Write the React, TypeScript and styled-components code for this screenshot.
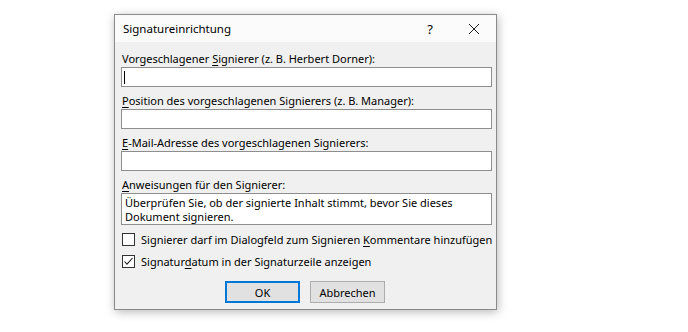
import React from 'react'
import styled, { createGlobalStyle } from 'styled-components'

const GlobalStyle = createGlobalStyle`
  body {
    margin: 0;
    background: #ffffff;
    font-family: 'Noto Sans', 'Open Sans', sans-serif;
    font-size: 11px;
    color: #000;
  }
`

const Page = styled.div`
  padding: 14px 0 0 114px;
  height: 332px;
  box-sizing: border-box;
`

const Dialog = styled.div`
  width: 383px;
  height: 296px;
  box-sizing: border-box;
  border: 1px solid #8a8a8a;
  background: #f0f0f0;
  box-shadow: 1px 2px 9px rgba(0, 0, 0, 0.28);
  display: flex;
  flex-direction: column;
`

const TitleBar = styled.div`
  height: 27px;
  background: #fbfbfb;
  display: flex;
  align-items: center;
  padding-left: 8px;
`

const Title = styled.div`
  flex: 1;
  font-size: 11.5px;
`

const TitleButton = styled.div`
  width: 44px;
  height: 27px;
  display: flex;
  align-items: center;
  justify-content: center;
  font-size: 13px;
`

const Body = styled.div`
  flex: 1;
  padding: 9px 5px 0 6px;
  display: flex;
  flex-direction: column;
`

const Field = styled.div<{ $first?: boolean }>`
  margin-top: ${({ $first }) => ($first ? 0 : 6)}px;
  display: flex;
  flex-direction: column;
`

const Label = styled.div`
  height: 16px;
  line-height: 16px;
  padding-left: 1px;
  white-space: nowrap;
`

const Key = styled.span`
  text-decoration: underline;
  text-underline-offset: 2px;
`

const Input = styled.div<{ $tall?: boolean }>`
  position: relative;
  height: ${({ $tall }) => ($tall ? 32 : 20)}px;
  box-sizing: border-box;
  width: 371px;
  border: 1px solid #8e8e8e;
  background: #fff;
  padding: 2px 3px;
  line-height: 14px;
  white-space: pre-line;
`

const Caret = styled.span`
  position: absolute;
  left: 2px;
  top: 3px;
  width: 1px;
  height: 13px;
  background: #000;
`

const Checks = styled.div`
  margin-top: 6px;
  display: flex;
  flex-direction: column;
  gap: 5px;
`

const CheckRow = styled.div`
  height: 17px;
  display: flex;
  align-items: center;
  gap: 6px;
  padding-left: 1px;
  white-space: nowrap;
`

const Box = styled.span`
  flex-shrink: 0;
  width: 13px;
  height: 13px;
  box-sizing: border-box;
  border: 1px solid #333;
  background: #fff;
  display: flex;
  align-items: center;
  justify-content: center;
`

const Buttons = styled.div`
  margin-top: 11px;
  display: flex;
  justify-content: center;
  gap: 10px;
  padding-right: 2px;
`

const Button = styled.div<{ $default?: boolean }>`
  width: 75px;
  height: 22px;
  box-sizing: border-box;
  background: #e1e1e1;
  border: ${({ $default }) => ($default ? '2px solid #0078d7' : '1px solid #adadad')};
  display: flex;
  align-items: center;
  justify-content: center;
`

const Check = ({ checked, children }: { checked?: boolean; children: React.ReactNode }) => (
  <CheckRow>
    <Box>
      {checked && (
        <svg width="11" height="11" viewBox="0 0 11 11">
          <polyline points="1.5,5.5 4,8.2 9.5,2" fill="none" stroke="#222" strokeWidth="1.1" />
        </svg>
      )}
    </Box>
    <span>{children}</span>
  </CheckRow>
)

const App = () => {
  return (
    <Page>
      <GlobalStyle />
      <Dialog>
        <TitleBar>
          <Title>Signatureinrichtung</Title>
          <TitleButton>?</TitleButton>
          <TitleButton>
            <svg width="12" height="12" viewBox="0 0 12 12">
              <path d="M1 1 L11 11 M11 1 L1 11" stroke="#222" strokeWidth="1" />
            </svg>
          </TitleButton>
        </TitleBar>
        <Body>
          <Field $first>
            <Label>
              Vorgeschlagener <Key>S</Key>ignierer (z. B. Herbert Dorner):
            </Label>
            <Input>
              <Caret />
            </Input>
          </Field>
          <Field>
            <Label>
              <Key>P</Key>osition des vorgeschlagenen Signierers (z. B. Manager):
            </Label>
            <Input />
          </Field>
          <Field>
            <Label>
              <Key>E</Key>-Mail-Adresse des vorgeschlagenen Signierers:
            </Label>
            <Input />
          </Field>
          <Field>
            <Label>
              <Key>A</Key>nweisungen für den Signierer:
            </Label>
            <Input $tall>
              {'Überprüfen Sie, ob der signierte Inhalt stimmt, bevor Sie dieses\nDokument signieren.'}
            </Input>
          </Field>
          <Checks>
            <Check>
              Signierer darf im Dialogfeld zum Signieren <Key>K</Key>ommentare hinzufügen
            </Check>
            <Check checked>
              Signatur<Key>d</Key>atum in der Signaturzeile anzeigen
            </Check>
          </Checks>
          <Buttons>
            <Button $default>OK</Button>
            <Button>Abbrechen</Button>
          </Buttons>
        </Body>
      </Dialog>
    </Page>
  )
}

export default App
